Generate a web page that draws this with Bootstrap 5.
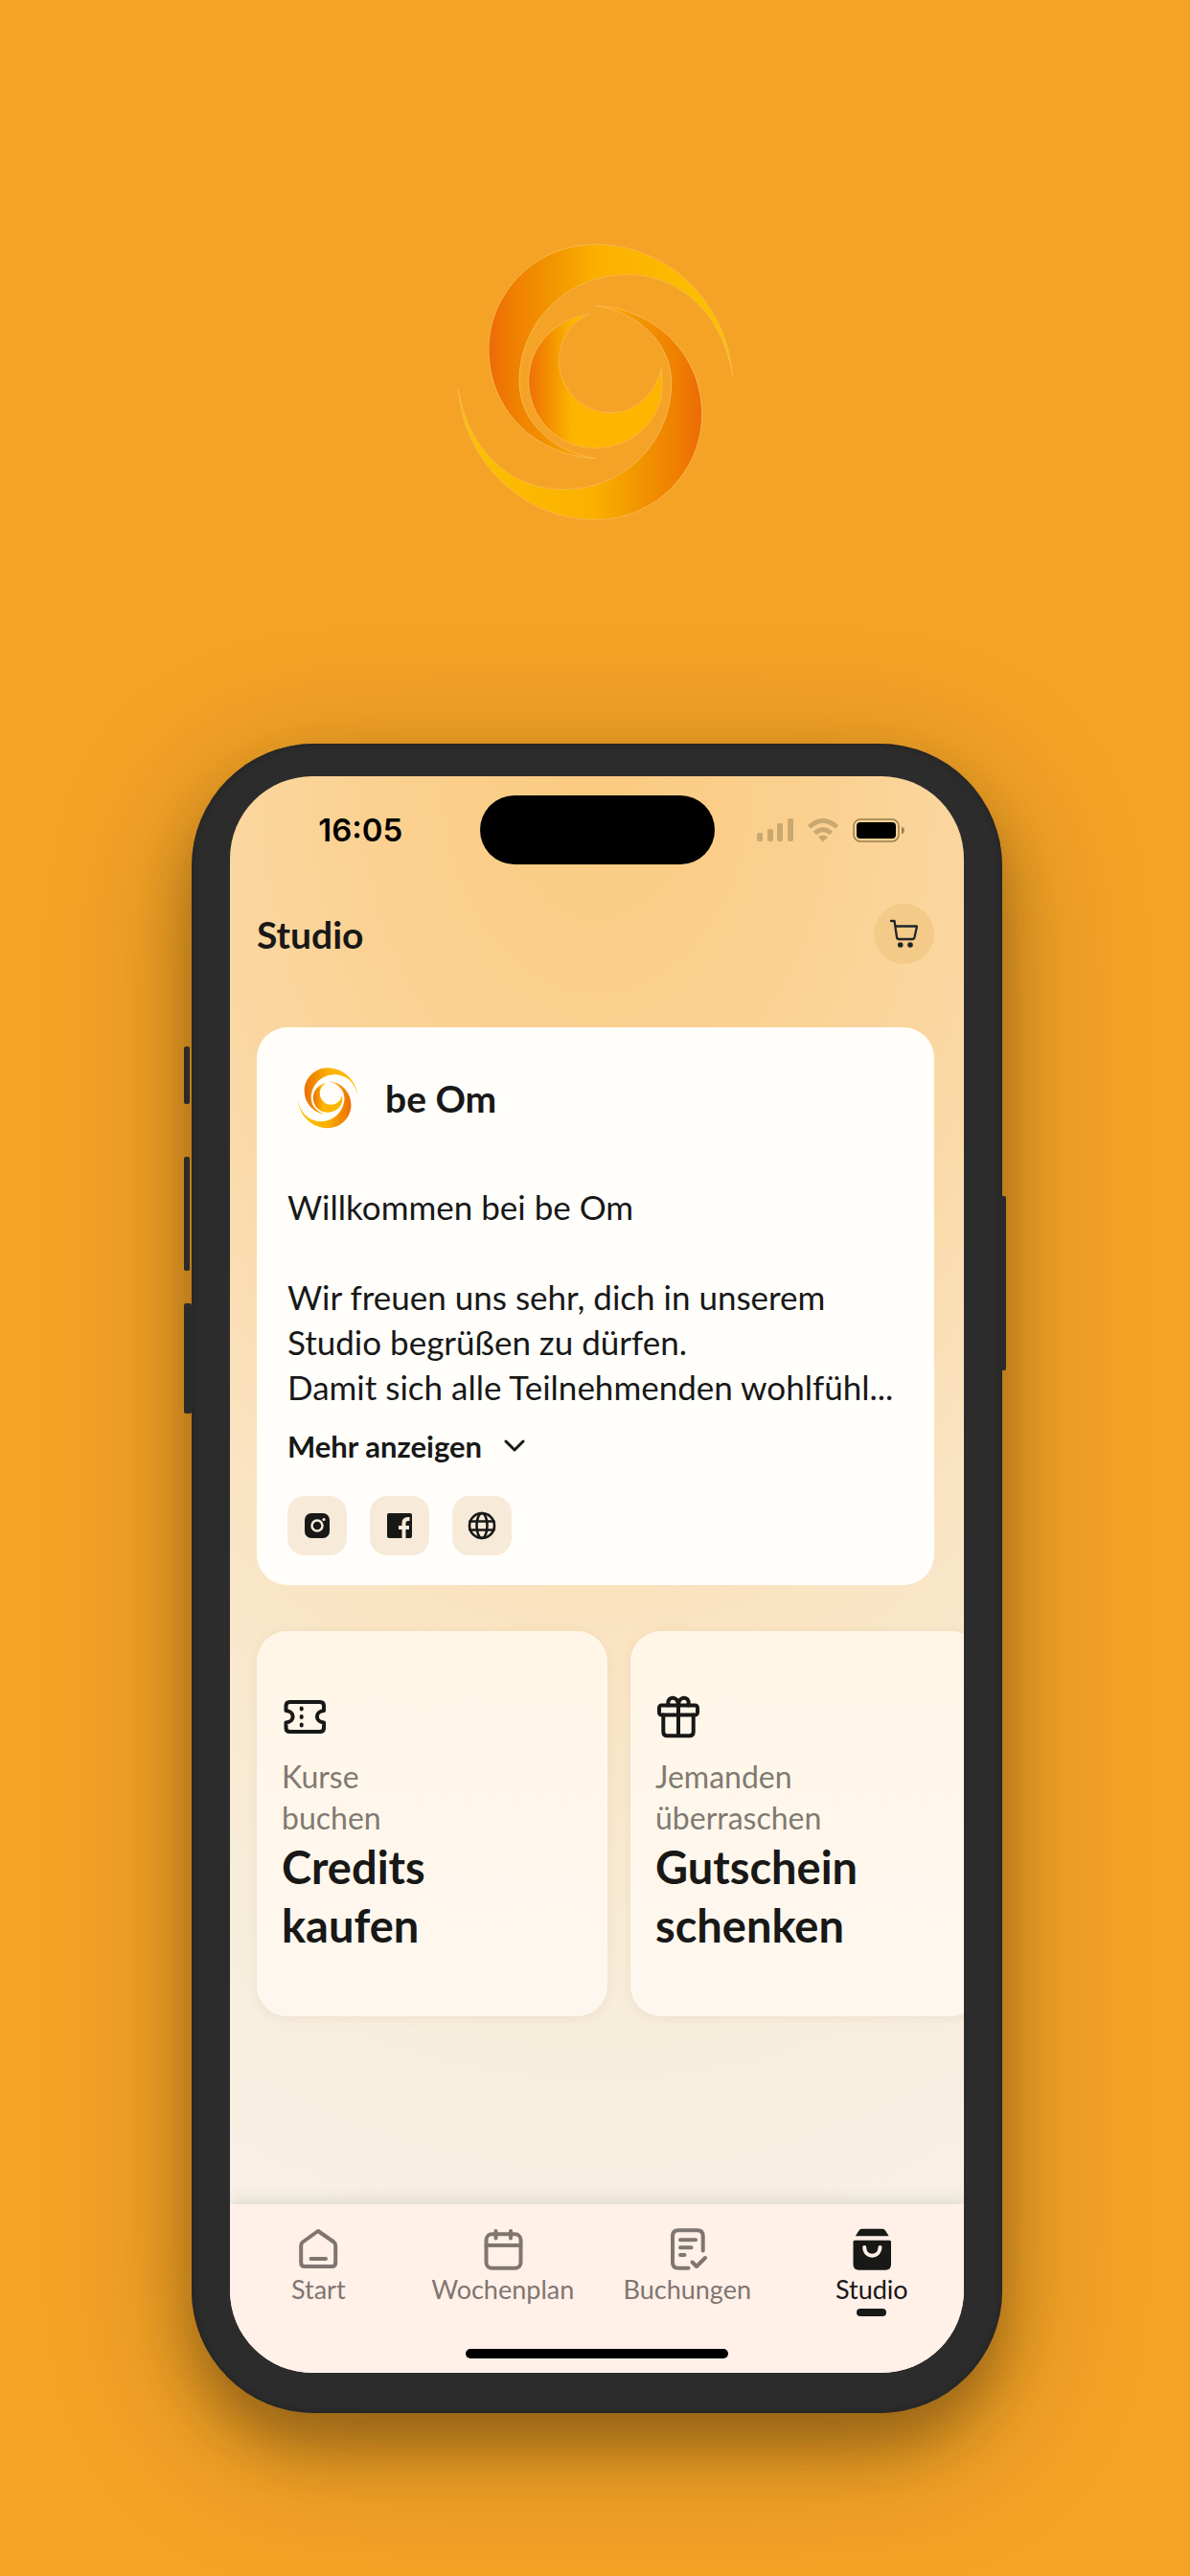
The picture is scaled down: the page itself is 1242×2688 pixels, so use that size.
<!DOCTYPE html>
<html lang="de">
<head>
<meta charset="utf-8">
<meta name="viewport" content="width=device-width, initial-scale=1">
<title>be Om – Studio</title>
<link href="https://cdn.jsdelivr.net/npm/bootstrap@5.3.0/dist/css/bootstrap.min.css" rel="stylesheet">
<style>
  body { background: #f4a326; color: #181817; font-family: Lato, "Open Sans", sans-serif; }
  .stage { padding: 240px 0 170px; }
  .brand-mark { width: 320px; height: 320px; }
  .phone-wrap { padding: 216px 0 0 4px; }

  /* Device */
  .phone {
    width: 846px; max-width: 100%; aspect-ratio: 846 / 1742;
    padding: 34px 40px 42px; border-radius: 128px; background: #2c2c2c;
    box-shadow: inset 0 0 6px #202020, 0 36px 54px rgba(40, 28, 6, .32), 0 32px 150px rgba(40, 28, 6, .27);
  }
  .side-key { width: 6px; background: #2b2b2b; border-radius: 2px; }
  .key-left { left: -8px; }
  .key-mute { top: 316px; height: 60px; }
  .key-up { top: 431px; height: 119px; }
  .key-down { top: 584px; height: 115px; width: 8px; }
  .key-power { top: 472px; right: -4px; height: 182px; }
  .screen {
    border-radius: 86px;
    background: radial-gradient(1080px 1560px at 50% -10px, #fbca80 0, #fbd191 22%, #fad7a2 38%, #fae4c3 59%, #f7edda 82%, #f8f0e5 100%);
  }

  /* Status bar */
  .status { padding-top: 20px; }
  .status-time { font: 600 33px/40px Inter, sans-serif; color: #000; padding-left: 12px; }
  .status-icons { gap: 15px; padding-right: 18px; }
  .island { width: 245px; height: 72px; background: #000; }

  .content { padding: 41px 31px 0 28px; }
  .page-title { font-size: 39px; line-height: 48px; font-weight: 700; }
  .cart-btn { width: 63px; height: 63px; background: #f4ca88; }

  /* Studio card */
  .studio-card { margin-top: 66px; padding: 39px 32px 31px; border-radius: 32px; background: #fffefb; }
  .studio-head { padding-left: 7px; gap: 25px; }
  .studio-name { font-size: 39px; line-height: 48px; font-weight: 700; }
  .studio-text { margin-top: 55px; font-size: 35px; line-height: 47px; }
  .more-btn { margin-top: 18px; gap: 22px; font-size: 31px; line-height: 40px; font-weight: 700; color: #181817; }
  .social-row { margin-top: 32px; gap: 24px; }
  .social-link { width: 62px; height: 62px; border-radius: 18px; background: #f7ead9; }

  /* Tiles */
  .tile-row { margin-top: 48px; gap: 24px; margin-right: -31px; }
  .tile {
    flex: 0 0 366px; padding: 65px 26px 64px; border-radius: 32px; color: #181817;
    background: linear-gradient(#fff6e7, #fff7ec 60%, #fef7f0);
    box-shadow: 0 2px 12px rgba(140, 100, 40, .09);
  }
  .tile-sub { margin-top: 17px; font-size: 32px; line-height: 43px; color: #7f7a72; }
  .tile-title { font-size: 47px; line-height: 61px; font-weight: 700; }

  /* Tab bar */
  .tabs { background: #fff0e8; box-shadow: 0 -4px 16px rgba(100, 110, 80, .16); padding: 23px 0 15px; }
  .tab-row { margin-left: -4px; }
  .tab { color: #7f7671; font-size: 27px; line-height: 36px; }
  .tab.active { color: #181817; }
  .tab-mark { width: 31px; height: 8px; background: transparent; margin-top: 2px; }
  .tab.active .tab-mark { background: #181817; }
  .home-bar { width: 274px; height: 10px; background: #000; margin-top: 34px; }
  .line-icon { fill: none; stroke: currentColor; stroke-width: 4; stroke-linecap: round; stroke-linejoin: round; }
</style>
<script src="https://cdn.jsdelivr.net/npm/bootstrap@5.3.0/dist/js/bootstrap.bundle.min.js"></script>
</head>
<body>
<svg width="0" height="0" class="position-absolute" aria-hidden="true">
  <defs>
    <linearGradient id="g1" gradientUnits="userSpaceOnUse" x1="147" y1="0" x2="910" y2="0">
      <stop offset="0" stop-color="#ec6a08"/><stop offset=".1" stop-color="#ef7f00"/><stop offset=".25" stop-color="#f29400"/><stop offset=".45" stop-color="#fbb000"/><stop offset="1" stop-color="#fcc200"/>
    </linearGradient>
    <linearGradient id="g2" gradientUnits="userSpaceOnUse" x1="272" y1="0" x2="410" y2="0">
      <stop offset="0" stop-color="#ee7008"/><stop offset=".5" stop-color="#f39200"/><stop offset="1" stop-color="#fdb500"/>
    </linearGradient>
    <symbol id="swirl" viewBox="0 0 960 960">
      <path id="arm" fill="url(#g1)" d="M910 455C895 235 715 45 480 45 295 45 147 195 147 375 147 560 290 705 480 715 350 695 243 600 243 475 243 290 390 140 580 140 750 140 880 265 910 455Z"/>
      <use href="#arm" transform="rotate(180 481 476)"/>
      <path fill="url(#g2)" d="M465 263C355 275 272 365 272 472 272 590 365 683 482 683 600 683 695 590 690 480L688 432C670 510 610 572 530 572 440 572 368 500 368 410 368 340 405 285 465 263Z"/>
    </symbol>
  </defs>
</svg>

<main class="stage d-flex flex-column align-items-center min-vh-100">
  <svg class="brand-mark" role="img" aria-label="be Om" stroke="#f9b64c" stroke-width="3"><use href="#swirl"/></svg>

  <div class="phone-wrap mw-100">
    <div class="phone position-relative d-flex flex-column">
      <span class="side-key key-left key-mute position-absolute"></span>
      <span class="side-key key-left key-up position-absolute"></span>
      <span class="side-key key-left key-down position-absolute"></span>
      <span class="side-key key-power position-absolute"></span>

      <div class="screen flex-grow-1 d-flex flex-column overflow-hidden">
        <div class="status d-flex align-items-center">
          <div class="status-time flex-fill w-25 text-center">16:05</div>
          <div class="island rounded-pill flex-shrink-0"></div>
          <div class="status-icons flex-fill w-25 d-flex justify-content-center align-items-center">
            <svg width="38" height="25" fill="#c9a870"><rect y="15" width="6" height="9" rx="2"/><rect x="11" y="11" width="6" height="13" rx="2"/><rect x="21" y="5" width="6" height="19" rx="2"/><rect x="32" width="6" height="24" rx="2"/></svg>
            <svg width="32" height="25" fill="none" stroke="#c9a870" stroke-width="5"><path d="M1.500 9Q16-4 30.500 9M7.500 15.500Q16 8 24.500 15.500"/><path d="M11 19.500Q16 15.500 21 19.500L16 24.500Z" fill="#c9a870" stroke="none"/></svg>
            <svg width="54" height="25"><rect x="1" y="1" width="47" height="23" rx="7" fill="none" stroke="#9a7c4c" stroke-width="1.500"/><rect x="4" y="4" width="41" height="17" rx="4"/><path d="M51 8.500Q54 10 54 12.500T51 16.500Z" fill="#9a7c4c"/></svg>
          </div>
        </div>

        <div class="content">
          <header class="d-flex justify-content-between align-items-center">
            <h1 class="page-title mb-0">Studio</h1>
            <button type="button" class="cart-btn btn p-0 border-0 rounded-circle" aria-label="Warenkorb">
              <svg class="line-icon d-block" width="63" height="63" style="stroke-width:2.300"><path d="M18 18h3.500L24 35q.3 2 2.300 2H40q2 0 2.500-2L45 23.500H22.300"/><g fill="currentColor" stroke="none"><circle cx="27.700" cy="43" r="2.800"/><circle cx="38" cy="43" r="2.800"/></g></svg>
            </button>
          </header>

          <section class="studio-card">
            <div class="studio-head d-flex align-items-center">
              <svg width="70" height="70" aria-hidden="true"><use href="#swirl"/></svg>
              <h2 class="studio-name mb-0">be Om</h2>
            </div>
            <div class="studio-text">
              Willkommen bei be Om<br><br>
              Wir freuen uns sehr, dich in unserem<br>
              Studio begrüßen zu dürfen.<br>
              <span class="text-nowrap">Damit sich alle Teilnehmenden wohlfühl...</span>
            </div>
            <button type="button" class="more-btn btn p-0 border-0 rounded-0 d-flex align-items-center">
              Mehr anzeigen
              <svg class="line-icon" width="24" height="14" style="stroke-width:3"><path d="M3 2l9 9 9-9"/></svg>
            </button>
            <div class="social-row d-flex">
              <a href="#" class="social-link d-block text-reset" aria-label="Instagram">
                <svg class="d-block" width="62" height="62"><rect x="18" y="18" width="26" height="26" rx="7" fill="#181817"/><circle cx="31" cy="31" r="5.500" fill="none" stroke="#f7ead9" stroke-width="2.500"/><circle cx="38" cy="24.500" r="1.600" fill="#f7ead9"/></svg>
              </a>
              <a href="#" class="social-link d-block text-reset" aria-label="Facebook">
                <svg class="d-block" width="62" height="62"><rect x="18" y="18" width="26" height="26" rx="2" fill="#181817"/><path d="M35.500 44V28.500Q35.500 24 40 24h1.500M30 33h11" fill="none" stroke="#f7ead9" stroke-width="4"/></svg>
              </a>
              <a href="#" class="social-link d-block text-reset" aria-label="Webseite">
                <svg class="line-icon d-block" width="62" height="62" style="stroke-width:2.600"><circle cx="31" cy="31" r="13"/><ellipse cx="31" cy="31" rx="5.500" ry="13"/><path d="M18.500 26.500h25M18.500 35.500h25"/></svg>
              </a>
            </div>
          </section>

          <div class="tile-row d-flex">
            <a href="#" class="tile text-decoration-none">
              <svg class="line-icon d-block" width="48" height="48"><path d="M8.500 9h31.500q4 0 4 4v5c-9.500 1-9.500 11.500 0 12.500V36q0 4-4 4H8.500q-4 0-4-4v-5.500c9.500-1 9.500-11.500 0-12.500v-5q0-4 4-4ZM20.700 15.500v1M20.700 24v1M20.700 32.500v1"/></svg>
              <div class="tile-sub">Kurse<br>buchen</div>
              <div class="tile-title">Credits<br>kaufen</div>
            </a>
            <a href="#" class="tile text-decoration-none">
              <svg class="line-icon d-block" width="48" height="48"><rect x="4" y="12.500" width="40" height="10" rx="2.500"/><path d="M8.300 22.500V40q0 4.300 4.300 4.300h22.800q4.300 0 4.300-4.300V22.500M24 12.500v31.500M24 12.500C24 2.500 13.300 2.500 13.300 10v2.500M24 12.500C24 2.500 34.700 2.500 34.700 10v2.500"/></svg>
              <div class="tile-sub">Jemanden<br>überraschen</div>
              <div class="tile-title">Gutschein<br>schenken</div>
            </a>
          </div>
        </div>

        <nav class="tabs mt-auto d-flex flex-column align-items-center">
          <div class="tab-row d-flex align-self-stretch">
            <a href="#" class="tab w-25 d-flex flex-column align-items-center text-decoration-none">
              <svg class="line-icon" width="48" height="48"><path d="M24 5 8 16.500Q6.200 18 6.200 20v18q0 4 4 4h28q4 0 4-4V20q0-2-1.800-3.500ZM16.500 34h15.500"/></svg>
              Start<span class="tab-mark rounded-pill"></span>
            </a>
            <a href="#" class="tab w-25 d-flex flex-column align-items-center text-decoration-none">
              <svg class="line-icon" width="48" height="48"><rect x="6.500" y="8.300" width="36" height="35.500" rx="6"/><path d="M6.500 20h36M16.500 5v7.500M32 5v7.500"/></svg>
              Wochenplan<span class="tab-mark rounded-pill"></span>
            </a>
            <a href="#" class="tab w-25 d-flex flex-column align-items-center text-decoration-none">
              <svg class="line-icon" width="48" height="48"><path d="M25.500 43.700H15q-6 0-6-6V10.300q0-6 6-6h19.700q6 0 6 6V25.500M17 14.300h16M17 22.300h11.500M17 30h4.500M29.500 37.500 34 42l9-9"/></svg>
              Buchungen<span class="tab-mark rounded-pill"></span>
            </a>
            <a href="#" class="tab active w-25 d-flex flex-column align-items-center text-decoration-none" aria-current="page">
              <svg width="48" height="48" fill="currentColor"><path d="M6.800 10.300 10.500 4.500Q11.500 2.700 13.500 2.700h21.500q2 0 3 1.800l3.700 5.800ZM6 14.700h36.500q1.500 0 1.500 1.500V40q0 5.700-5.700 5.700H10.200Q4.500 45.700 4.500 40V16.200q0-1.500 1.500-1.500Z"/><path d="M16.200 22C16.500 33.500 32 33.500 32.500 22" fill="none" stroke="#fff0e8" stroke-width="4" stroke-linecap="round"/></svg>
              Studio<span class="tab-mark rounded-pill"></span>
            </a>
          </div>
          <div class="home-bar rounded-pill"></div>
        </nav>
      </div>
    </div>
  </div>
</main>
</body>
</html>
